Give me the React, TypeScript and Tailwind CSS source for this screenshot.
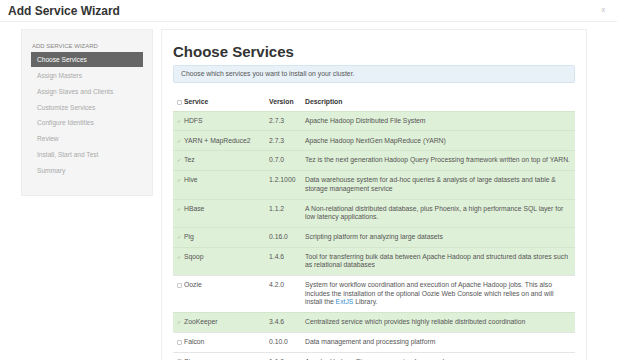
import React from "react";

type Service = {
  name: string;
  version: string;
  lines: React.ReactNode[];
  checked: boolean;
};

const steps = [
  "Choose Services",
  "Assign Masters",
  "Assign Slaves and Clients",
  "Customize Services",
  "Configure Identities",
  "Review",
  "Install, Start and Test",
  "Summary",
];

const services: Service[] = [
  { name: "HDFS", version: "2.7.3", lines: ["Apache Hadoop Distributed File System"], checked: true },
  { name: "YARN + MapReduce2", version: "2.7.3", lines: ["Apache Hadoop NextGen MapReduce (YARN)"], checked: true },
  {
    name: "Tez",
    version: "0.7.0",
    lines: ["Tez is the next generation Hadoop Query Processing framework written on top of YARN."],
    checked: true,
  },
  {
    name: "Hive",
    version: "1.2.1000",
    lines: [
      "Data warehouse system for ad-hoc queries & analysis of large datasets and table &",
      "storage management service",
    ],
    checked: true,
  },
  {
    name: "HBase",
    version: "1.1.2",
    lines: [
      "A Non-relational distributed database, plus Phoenix, a high performance SQL layer for",
      "low latency applications.",
    ],
    checked: true,
  },
  { name: "Pig", version: "0.16.0", lines: ["Scripting platform for analyzing large datasets"], checked: true },
  {
    name: "Sqoop",
    version: "1.4.6",
    lines: [
      "Tool for transferring bulk data between Apache Hadoop and structured data stores such",
      "as relational databases",
    ],
    checked: true,
  },
  {
    name: "Oozie",
    version: "4.2.0",
    lines: [
      "System for workflow coordination and execution of Apache Hadoop jobs. This also",
      "includes the installation of the optional Oozie Web Console which relies on and will",
      <>
        install the <span className="text-[#3a8fd0]">ExtJS</span> Library.
      </>,
    ],
    checked: false,
  },
  {
    name: "ZooKeeper",
    version: "3.4.6",
    lines: ["Centralized service which provides highly reliable distributed coordination"],
    checked: true,
  },
  { name: "Falcon", version: "0.10.0", lines: ["Data management and processing platform"], checked: false },
  { name: "Storm", version: "1.1.0", lines: ["Apache Hadoop Stream processing framework"], checked: false },
];

const Check = ({ checked }: { checked: boolean }) =>
  checked ? (
    <span className="inline-block w-[5px] text-[5px] leading-[8px] text-[#9bb592]">✓</span>
  ) : (
    <span className="inline-block w-[5px] h-[5px] mt-[1.5px] border border-[#c8c8c8] bg-white rounded-[1px]" />
  );

export default function App() {
  return (
    <div className="w-[617px] h-[360px] overflow-hidden bg-white font-['Liberation_Sans',Arial,sans-serif] text-[#333]">
      <div className="flex items-center justify-between h-[22px] pl-[8px] pr-[12px] border-b border-[#eeeeee]">
        <h1 className="text-[12px] font-bold leading-none text-[#333]">Add Service Wizard</h1>
        <span className="text-[7px] text-[#bbb]">x</span>
      </div>

      <div className="flex items-start gap-[8px] pl-[21px] pr-[30px] pt-[7px]">
        <div className="w-[132px] shrink-0 bg-[#f5f5f5] border border-[#eeeeee] pt-[12px] pb-[16px] px-[9px]">
          <div className="text-[6px] leading-[8px] text-[#888] uppercase pb-[2px] pl-[1px]">Add Service Wizard</div>
          {steps.map((step, idx) => (
            <div
              key={idx}
              className={
                idx === 0
                  ? "h-[15px] flex items-center px-[6px] bg-[#666666] text-white text-[6.6px] mb-[1px]"
                  : "h-[15.8px] flex items-center px-[6px] text-[#aaa] text-[6.6px]"
              }
            >
              {step}
            </div>
          ))}
        </div>

        <div className="flex-1 border border-[#eeeeee] px-[11px] pt-[12px] h-[340px]">
          <h2 className="text-[15px] font-bold leading-[20px] text-[#333]">Choose Services</h2>
          <div className="mt-[3px] h-[18px] flex items-center px-[7px] bg-[#e8f1f8] border border-[#d5e6f1] rounded-[2px] text-[6.8px] text-[#555]">
            Choose which services you want to install on your cluster.
          </div>

          <table className="mt-[11px] w-full border-collapse text-[6.8px] leading-[8.5px]">
            <thead>
              <tr className="text-left font-bold text-[#333]">
                <th className="py-[4px] pl-[4px] w-[96px]">
                  <div className="flex gap-[2px] items-start">
                    <Check checked={false} />
                    <span>Service</span>
                  </div>
                </th>
                <th className="py-[4px] w-[36px]">Version</th>
                <th className="py-[4px]">Description</th>
              </tr>
            </thead>
            <tbody>
              {services.map((s, idx) => (
                <tr
                  key={idx}
                  className={
                    s.checked
                      ? "bg-[#dff0d8] border-t border-[#d3e6cb] align-top text-[#555]"
                      : "bg-white border-t border-[#e5e5e5] align-top text-[#555]"
                  }
                >
                  <td className="py-[5.2px] pl-[4px]">
                    <div className="flex gap-[2px] items-start">
                      <Check checked={s.checked} />
                      <span>{s.name}</span>
                    </div>
                  </td>
                  <td className="py-[5.2px]">{s.version}</td>
                  <td className="py-[5.2px] pr-[4px]">
                    {s.lines.map((line, i) => (
                      <div key={i} className="whitespace-nowrap">
                        {line}
                      </div>
                    ))}
                  </td>
                </tr>
              ))}
            </tbody>
          </table>
        </div>
      </div>
    </div>
  );
}
